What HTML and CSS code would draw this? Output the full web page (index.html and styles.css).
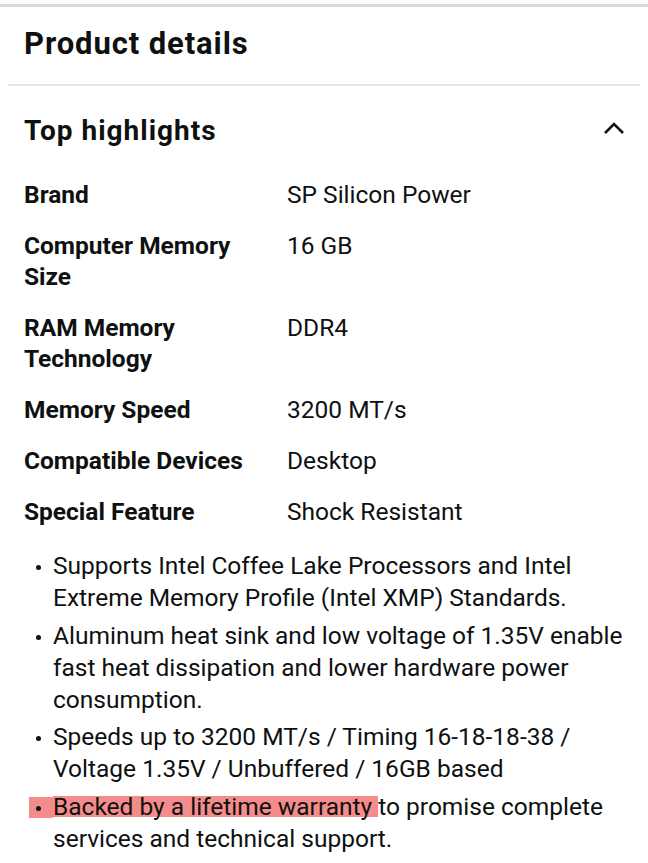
FILE: index.html
```html
<!DOCTYPE html>
<html lang="en">
<head>
<meta charset="utf-8">
<link rel="stylesheet" href="styles.css">
</head>
<body>
<div class="topbar"></div>
<section class="card">
  <h1 class="title">Product details</h1>
  <div class="divider"></div>
  <div class="section-head">
    <h2 class="subtitle">Top highlights</h2>
    <svg class="chevron" width="22" height="14" viewBox="0 0 22 14"><path d="M2 12 L11 3 L20 12" fill="none" stroke="#0f1111" stroke-width="2.6"/></svg>
  </div>
  <div class="specs">
    <div class="label">Brand</div><div class="value">SP Silicon Power</div>
    <div class="label">Computer Memory Size</div><div class="value">16 GB</div>
    <div class="label">RAM Memory Technology</div><div class="value">DDR4</div>
    <div class="label">Memory Speed</div><div class="value">3200 MT/s</div>
    <div class="label">Compatible Devices</div><div class="value">Desktop</div>
    <div class="label">Special Feature</div><div class="value">Shock Resistant</div>
  </div>
  <ul class="bullets">
    <li>Supports Intel Coffee Lake Processors and Intel Extreme Memory Profile (Intel XMP) Standards.</li>
    <li>Aluminum heat sink and low voltage of 1.35V enable fast heat dissipation and lower hardware power consumption.</li>
    <li>Speeds up to 3200 MT/s / Timing 16-18-18-38 / Voltage 1.35V / Unbuffered / 16GB based</li>
    <li class="marked"><span class="hl">Backed by a lifetime warranty </span>to promise complete services and technical support.</li>
  </ul>
</section>
</body>
</html>
```
FILE: styles.css
```css
html, body {
  margin: 0;
  padding: 0;
  background: #ffffff;
}
body {
  font-family: Roboto, "Liberation Sans", sans-serif;
  color: #0f1111;
  width: 648px;
  height: 863px;
  overflow: hidden;
}
.topbar {
  height: 3px;
  margin-top: 4px;
  background: #d5dbdb;
}
.title {
  margin: 0;
  padding: 19px 24px 0 24px;
  height: 56px;
  box-sizing: border-box;
  font-size: 31px;
  line-height: 36px;
  font-weight: 700;
  letter-spacing: 0.9px;
}
.divider {
  margin: 21px 8px 0 8px;
  height: 2px;
  background: #e3e6e6;
}
.section-head {
  display: flex;
  align-items: center;
  justify-content: space-between;
  padding: 28px 23px 0 24px;
}
.subtitle {
  margin: 0;
  font-size: 28px;
  line-height: 34px;
  font-weight: 700;
  letter-spacing: 1px;
}
.chevron {
  display: block;
  margin-top: -6px;
}
.specs {
  display: grid;
  grid-template-columns: 263px 1fr;
  row-gap: 20px;
  padding: 31px 24px 0 24px;
  font-size: 24.5px;
  line-height: 31px;
}
.label {
  font-weight: 700;
  padding-right: 20px;
}
.value {
  font-weight: 400;
}
.bullets {
  list-style: none;
  margin: 23px 0 0 0;
  padding: 0 22px 0 29px;
  font-size: 24.5px;
  line-height: 32px;
}
.bullets li {
  position: relative;
  padding-left: 24px;
  margin-bottom: 5.5px;
}
.bullets li::before {
  content: "";
  position: absolute;
  left: 7px;
  top: 15px;
  width: 5px;
  height: 5px;
  border-radius: 50%;
  background: #0f1111;
  z-index: 1;
}
.bullets li.marked::after {
  content: "";
  position: absolute;
  left: 0;
  top: 6px;
  width: 24px;
  height: 21px;
  background: #f48c8c;
}
.hl {
  background-image: linear-gradient(#f48c8c, #f48c8c);
  background-repeat: no-repeat;
  background-size: 100% 21px;
  background-position: 0 50%;
}
```
